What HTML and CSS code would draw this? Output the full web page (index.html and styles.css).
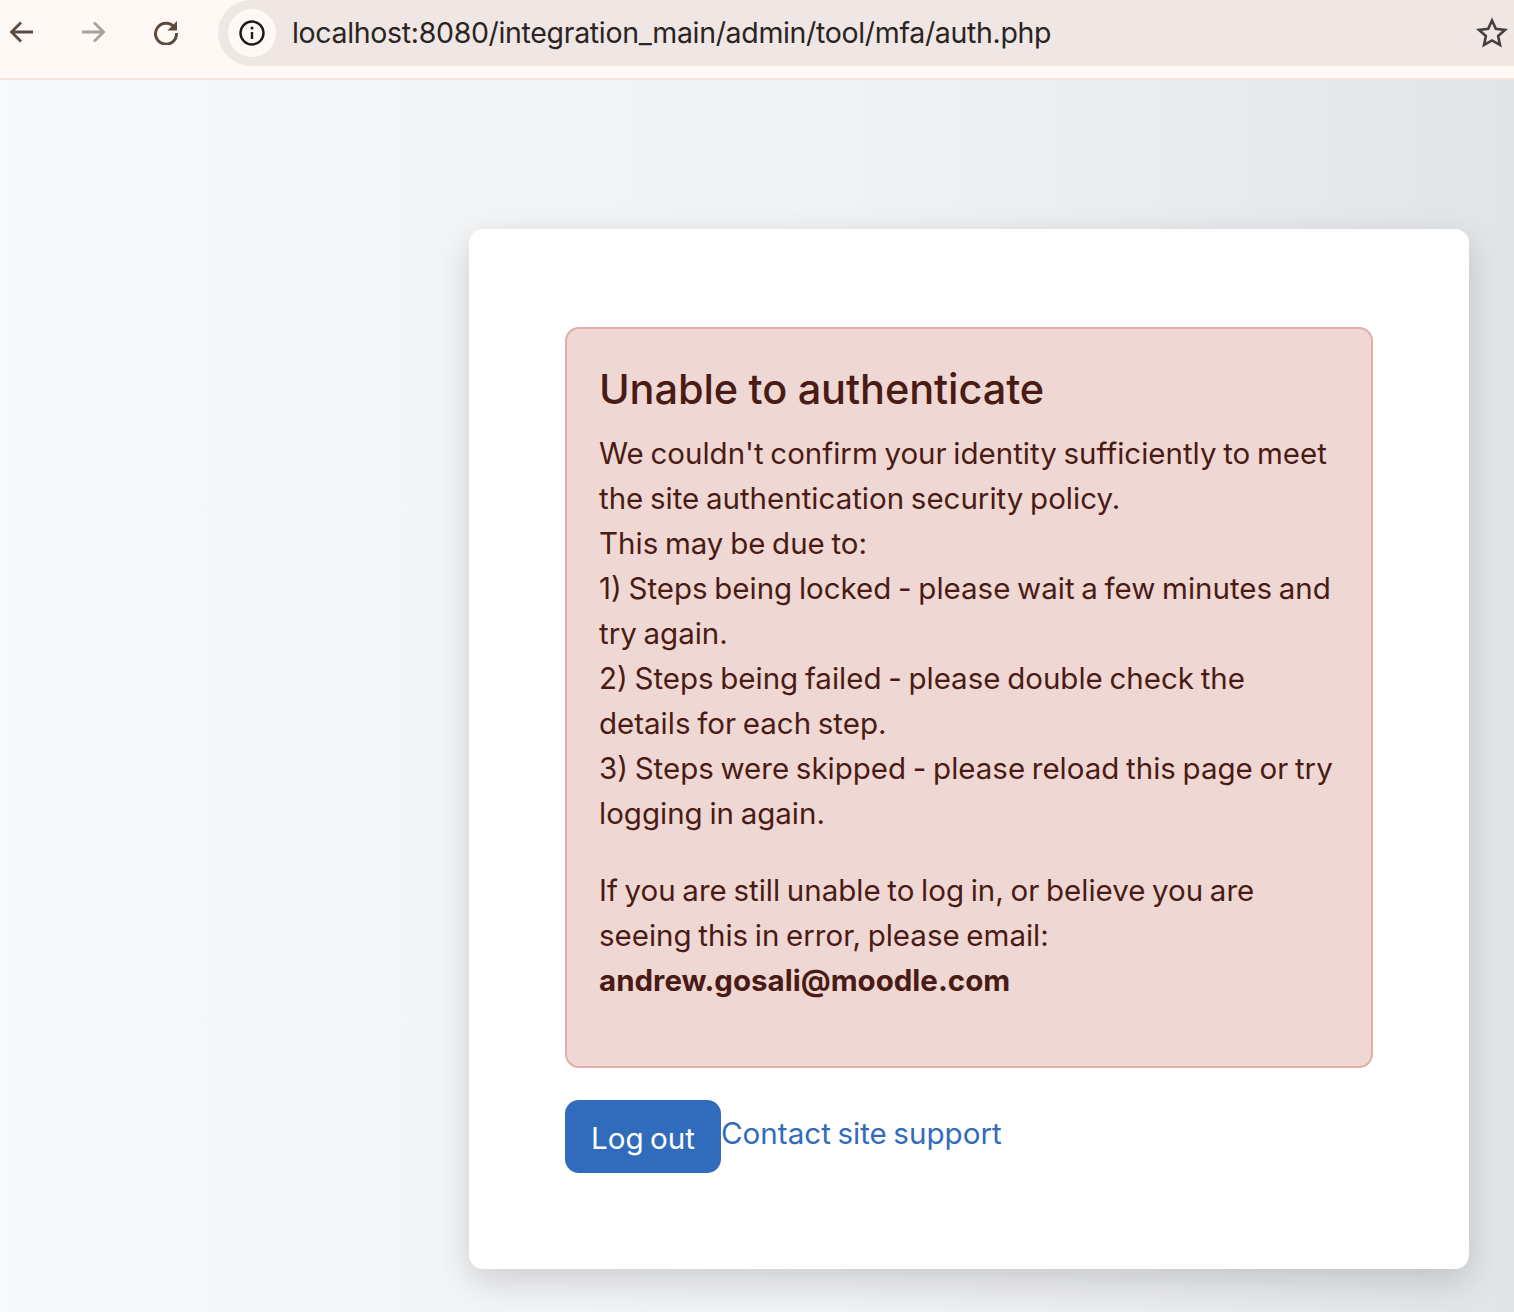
FILE: index.html
```html
<!DOCTYPE html>
<html lang="en">
<head>
<meta charset="utf-8">
<title>Unable to authenticate</title>
<link rel="stylesheet" href="styles.css">
</head>
<body>
<header class="toolbar">
  <svg class="nav-icon back" viewBox="0 0 26 26"><path d="M24 13H3M12 3.500 2.500 13l9.500 9.500"/></svg>
  <svg class="nav-icon forward" viewBox="0 0 26 26"><path d="M2 13h21M14 3.500l9.500 9.500-9.500 9.500"/></svg>
  <svg class="nav-icon reload" viewBox="0 0 26 26"><path d="M21.500 8.500A10.500 10.500 0 1 0 23.500 14"/><path class="fill" d="M24 2v9.500h-9.500z"/></svg>
  <div class="omnibox">
    <span class="site-info">
      <svg class="info-icon" viewBox="0 0 26 26"><circle cx="13" cy="13" r="11.500"/><path d="M13 12v7"/><circle class="dot" cx="13" cy="8" r="1.500"/></svg>
    </span>
    <span class="url">localhost:8080/integration_main/admin/tool/mfa/auth.php</span>
    <svg class="star" viewBox="0 0 32 32"><path d="M16 3.500l3.800 8.400 9.200 1-6.900 6.100 1.900 9-8-4.600-8 4.600 1.900-9L3 12.900l9.200-1z"/></svg>
  </div>
</header>
<main class="page">
  <section class="card">
    <div class="alert">
      <h1 class="alert-title">Unable to authenticate</h1>
      <p class="alert-body">We couldn't confirm your identity sufficiently to meet the site authentication security policy.<br>This may be due to:<br>1) Steps being locked - please wait a few minutes and try again.<br>2) Steps being failed - please double check the details for each step.<br>3) Steps were skipped - please reload this page or try logging in again.</p>
      <p class="alert-contact">If you are still unable to log in, or believe you are seeing this in error, please email:<br><strong>andrew.gosali@moodle.com</strong></p>
    </div>
    <div class="actions">
      <button class="btn" type="button">Log out</button>
      <a class="support" href="#">Contact site support</a>
    </div>
  </section>
</main>
</body>
</html>
```
FILE: styles.css
```css
* { box-sizing: border-box; }
html, body { margin: 0; height: 100%; }
body {
  font-family: Inter, "Liberation Sans", sans-serif;
  width: 1514px;
  height: 1312px;
  overflow: hidden;
  display: flex;
  flex-direction: column;
}
.toolbar {
  height: 80px;
  background: #fff8f4;
  border-bottom: 2px solid #f6e2da;
  display: flex;
  align-items: flex-start;
  flex: none;
}
.nav-icon {
  width: 26px;
  height: 26px;
  margin-top: 19px;
  fill: none;
  stroke: #5c4a3e;
  stroke-width: 2.800;
  flex: none;
}
.back { margin-left: 9px; }
.forward { margin-left: 45px; stroke: #a8a29c; }
.reload { margin-left: 47px; stroke-width: 3; }
.reload .fill { fill: #5c4a3e; stroke: none; }
.omnibox {
  margin-left: 39px;
  flex: 1;
  height: 66px;
  background: #f0e6e4;
  border-radius: 33px 0 0 33px;
  display: flex;
  align-items: center;
  padding-left: 10px;
}
.site-info {
  width: 48px;
  height: 48px;
  background: #fff8f4;
  border-radius: 50%;
  display: flex;
  align-items: center;
  justify-content: center;
  flex: none;
}
.info-icon { width: 26px; height: 26px; fill: none; stroke: #1f1a18; stroke-width: 2.400; }
.info-icon .dot { fill: #1f1a18; stroke: none; }
.url {
  margin-left: 16px;
  margin-top: -2px;
  font-size: 28.500px;
  letter-spacing: -0.330px;
  color: #2a2422;
  flex: 1;
  white-space: nowrap;
}
.star {
  width: 32px;
  height: 32px;
  margin-right: 6px;
  fill: none;
  stroke: #473f3e;
  stroke-width: 2.600;
  flex: none;
}
.page {
  flex: 1;
  background: linear-gradient(90deg, #f8f9fb 0%, #f3f4f6 35%, #f1f2f4 55%, #e2e5e8 100%);
  padding: 149px 45px 0 469px;
}
.card {
  width: 1000px;
  height: 1040px;
  background: #fff;
  border-radius: 14px;
  padding: 98px 96px 0;
  box-shadow: 0 12px 36px rgba(0, 0, 0, 0.16);
}
.alert {
  height: 741px;
  background: #efd7d3;
  border: 2px solid #e4aea8;
  border-radius: 14px;
  padding: 32px 32px 0;
  color: #4a1b14;
}
.alert-title {
  margin: 0 0 15px;
  padding-top: 1px;
  font-size: 41.500px;
  letter-spacing: -0.100px;
  word-spacing: -0.500px;
  font-weight: 500;
  line-height: 54px;
}
.alert-body, .alert-contact {
  margin: 0;
  font-size: 29.500px;
  word-spacing: -1.600px;
  line-height: 45px;
}
.alert-contact { margin-top: 32px; }
.alert-contact strong { font-weight: 700; }
.actions {
  margin-top: 32px;
  display: flex;
  align-items: flex-start;
}
.btn {
  width: 156px;
  height: 73px;
  background: #316bbc;
  color: #fff;
  border: 0;
  border-radius: 14px;
  font: 400 29.600px Inter, "Liberation Sans", sans-serif;
  word-spacing: -1.800px;
  padding: 2px 0 0;
}
.support {
  font-size: 29.600px;
  word-spacing: -1.800px;
  line-height: 45px;
  margin-top: 11px;
  color: #316bbc;
  text-decoration: none;
}
```
